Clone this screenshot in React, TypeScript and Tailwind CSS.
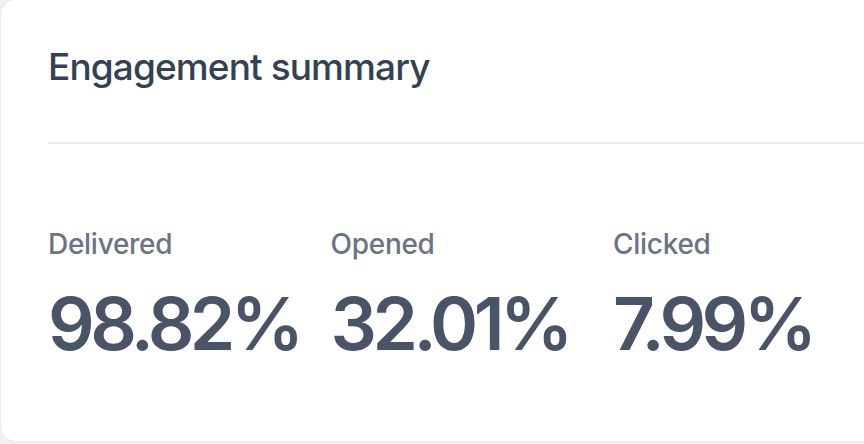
// engagement summary card
const stats = [
    { label: 'Delivered', value: '98.82%' },
    { label: 'Opened', value: '32.01%' },
    { label: 'Clicked', value: '7.99%' },
];

export default function App() {
    return (
        <div className="w-[864px] h-[444px] overflow-hidden bg-[#f1f1f4]" style={{ fontFamily: 'Inter, "Noto Sans", sans-serif' }}>
            <div className="w-[920px] h-[443px] -mt-px bg-white border border-[#ebebef] rounded-2xl">
                <div className="pl-[47px] pt-[48px]">
                    <h2 className="text-[37px] leading-none font-medium text-[#334155] tracking-[-0.024em]">Engagement summary</h2>
                    <div className="mt-[57px] h-[2px] bg-[#ebebef]" />
                </div>
                <div className="pl-[47px] pt-[86px] flex">
                    {stats.map((s) => (
                        <div key={s.label} className="w-[282.5px] flex flex-col">
                            <span className="text-[28px] leading-none font-medium text-[#6b7385] tracking-[-0.01em]">{s.label}</span>
                            <span className="mt-[29px] text-[73px] leading-none font-semibold text-[#4a5467] tracking-[-0.062em]">
                                {s.value}
                            </span>
                        </div>
                    ))}
                </div>
            </div>
        </div>
    );
}
